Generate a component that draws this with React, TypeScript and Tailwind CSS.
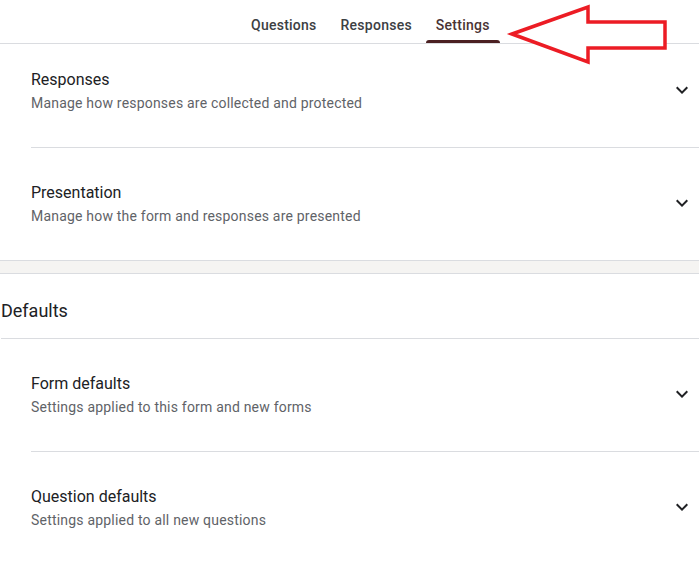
import React from "react";

function Chevron() {
  return (
    <svg width="24" height="24" viewBox="0 0 24 24" className="shrink-0">
      <path d="M16.59 8.59L12 13.17 7.41 8.59 6 10l6 6 6-6z" fill="#202124" />
    </svg>
  );
}

function Item({ title, sub, top, divider }: { title: string; sub: string; top: string; divider: boolean }) {
  return (
    <div className={`flex items-center pr-[5px] ${top} pb-[33px] ${divider ? "border-b border-[#dadce0]" : ""}`}>
      <div className="flex-1">
        <div className="text-[16px] leading-[24px] text-[#202124]">{title}</div>
        <div className="text-[14px] leading-[22px] tracking-[0.2px] text-[#5f6368]">{sub}</div>
      </div>
      <div className="-mt-[3px]">
        <Chevron />
      </div>
    </div>
  );
}

export default function App() {
  return (
    <div className="relative w-[699px] h-[561px] bg-white overflow-hidden" style={{ fontFamily: "Roboto, 'Noto Sans', sans-serif" }}>
      <div className="flex h-[44px] border-b border-[#dadce0] pl-[239px]">
        {[
          { t: "Questions", a: false },
          { t: "Responses", a: false },
          { t: "Settings", a: true },
        ].map((tab) => (
          <div key={tab.t} className="relative px-[12px] pt-[15px] text-[14px] leading-[20px] font-medium tracking-[0.25px]">
            <span className={tab.a ? "text-[#4a3434]" : "text-[#3c4043]"}>{tab.t}</span>
            {tab.a && <div className="absolute left-[2px] right-[2px] bottom-0 h-[3px] rounded-t-[3px] bg-[#4b2022]" />}
          </div>
        ))}
      </div>

      <div className="pl-[31px]">
        <Item title="Responses" sub="Manage how responses are collected and protected" top="pt-[24px]" divider />
        <Item title="Presentation" sub="Manage how the form and responses are presented" top="pt-[33px]" divider={false} />
      </div>

      <div className="h-[14px] border-y border-[#dadce0] bg-[#f5f4f2]" />

      <div className="pl-[1px]">
        <div className="h-[65px] flex items-center border-b border-[#dadce0] pt-[9px] text-[18px] text-[#202124]">Defaults</div>
      </div>

      <div className="pl-[31px]">
        <Item title="Form defaults" sub="Settings applied to this form and new forms" top="pt-[33px]" divider />
        <Item title="Question defaults" sub="Settings applied to all new questions" top="pt-[33px]" divider={false} />
      </div>

      <svg className="absolute left-0 top-0 pointer-events-none" width="699" height="80">
        <polygon
          points="512,34 588,7 588,22 665,22 665,48 588,48 588,62"
          fill="white"
          stroke="#ec1c24"
          strokeWidth="3.5"
          strokeLinejoin="miter"
        />
      </svg>
    </div>
  );
}
